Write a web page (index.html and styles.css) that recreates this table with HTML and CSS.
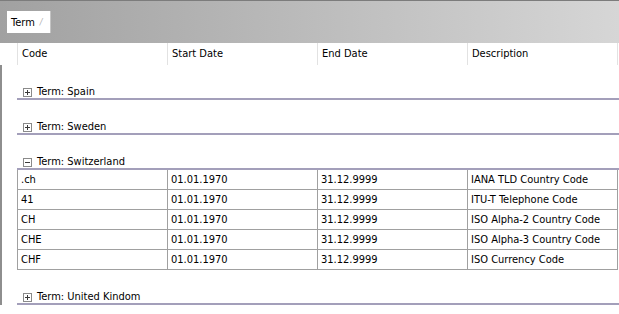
FILE: index.html
```html
<!DOCTYPE html>
<html>
<head>
<meta charset="utf-8">
<link rel="stylesheet" href="styles.css">
</head>
<body>
<div class="groupbar">
  <div class="tab"><span class="tab-label">Term</span><span class="tab-sort">/</span></div>
</div>
<div class="colhead">
  <div class="hcell">Code</div>
  <div class="hcell">Start Date</div>
  <div class="hcell">End Date</div>
  <div class="hcell">Description</div>
</div>
<div class="groups">
  <div class="group"><span class="toggle plus"></span><span class="gtext">Term: Spain</span></div>
  <div class="group"><span class="toggle plus"></span><span class="gtext">Term: Sweden</span></div>
  <div class="group"><span class="toggle minus"></span><span class="gtext">Term: Switzerland</span></div>
  <div class="rows">
    <div class="row"><div class="cell">.ch</div><div class="cell">01.01.1970</div><div class="cell">31.12.9999</div><div class="cell">IANA TLD Country Code</div></div>
    <div class="row"><div class="cell">41</div><div class="cell">01.01.1970</div><div class="cell">31.12.9999</div><div class="cell">ITU-T Telephone Code</div></div>
    <div class="row"><div class="cell">CH</div><div class="cell">01.01.1970</div><div class="cell">31.12.9999</div><div class="cell">ISO Alpha-2 Country Code</div></div>
    <div class="row"><div class="cell">CHE</div><div class="cell">01.01.1970</div><div class="cell">31.12.9999</div><div class="cell">ISO Alpha-3 Country Code</div></div>
    <div class="row"><div class="cell">CHF</div><div class="cell">01.01.1970</div><div class="cell">31.12.9999</div><div class="cell">ISO Currency Code</div></div>
  </div>
  <div class="group"><span class="toggle plus"></span><span class="gtext">Term: United Kindom</span></div>
</div>
</body>
</html>
```
FILE: styles.css
```css
html, body {
  margin: 0;
  padding: 0;
  background: #ffffff;
}
body {
  width: 619px;
  height: 314px;
  overflow: hidden;
  font-family: Tahoma, "DejaVu Sans Condensed", "DejaVu Sans", sans-serif;
  font-size: 11px;
  color: #000;
}
.groupbar {
  height: 32px;
  padding: 10px 0 0 7px;
  border-top: 1px solid #7c7c7c;
  background: linear-gradient(to right, #a1a1a1, #d6d6d6);
  display: flex;
  align-items: flex-start;
}
.tab {
  width: 44px;
  height: 22px;
  background: #fff;
  border-right: 1px solid #c4c4c4;
  display: flex;
  align-items: center;
  padding-left: 4px;
  box-sizing: border-box;
}
.tab-label { color: #000; }
.tab-sort {
  color: #b0b0b0;
  margin-left: 5px;
  font-size: 9px;
  font-style: italic;
}
.colhead {
  margin-left: 17px;
  height: 22px;
  display: grid;
  grid-template-columns: repeat(4, 150px);
  border-left: 1px solid #e2e2e2;
  box-sizing: border-box;
  width: 601px;
}
.hcell {
  border-right: 1px solid #e2e2e2;
  padding-left: 4px;
  line-height: 22px;
  white-space: nowrap;
}
.groups {
  border-left: 2px solid #8e8e8e;
  padding-left: 15px;
}
.group {
  height: 33px;
  border-bottom: 2px solid #a39fba;
  display: flex;
  align-items: flex-end;
}
.toggle {
  position: relative;
  width: 9px;
  height: 9px;
  box-sizing: border-box;
  border: 1px solid #8a8a8a;
  background: #fff;
  margin-left: 6px;
  margin-bottom: 1px;
}
.toggle::before {
  content: "";
  position: absolute;
  left: 1px;
  top: 3px;
  width: 5px;
  height: 1px;
  background: #3a3a3a;
}
.toggle.plus::after {
  content: "";
  position: absolute;
  left: 3px;
  top: 1px;
  width: 1px;
  height: 5px;
  background: #3a3a3a;
}
.gtext {
  margin-left: 5px;
  line-height: 13px;
}
.rows {
  width: 601px;
}
.row {
  display: grid;
  grid-template-columns: repeat(4, 150px);
  border-left: 1px solid #a0a0a0;
  border-bottom: 1px solid #a0a0a0;
  height: 20px;
  box-sizing: border-box;
}
.cell {
  border-right: 1px solid #a0a0a0;
  padding-left: 3px;
  line-height: 19px;
  white-space: nowrap;
}
```
